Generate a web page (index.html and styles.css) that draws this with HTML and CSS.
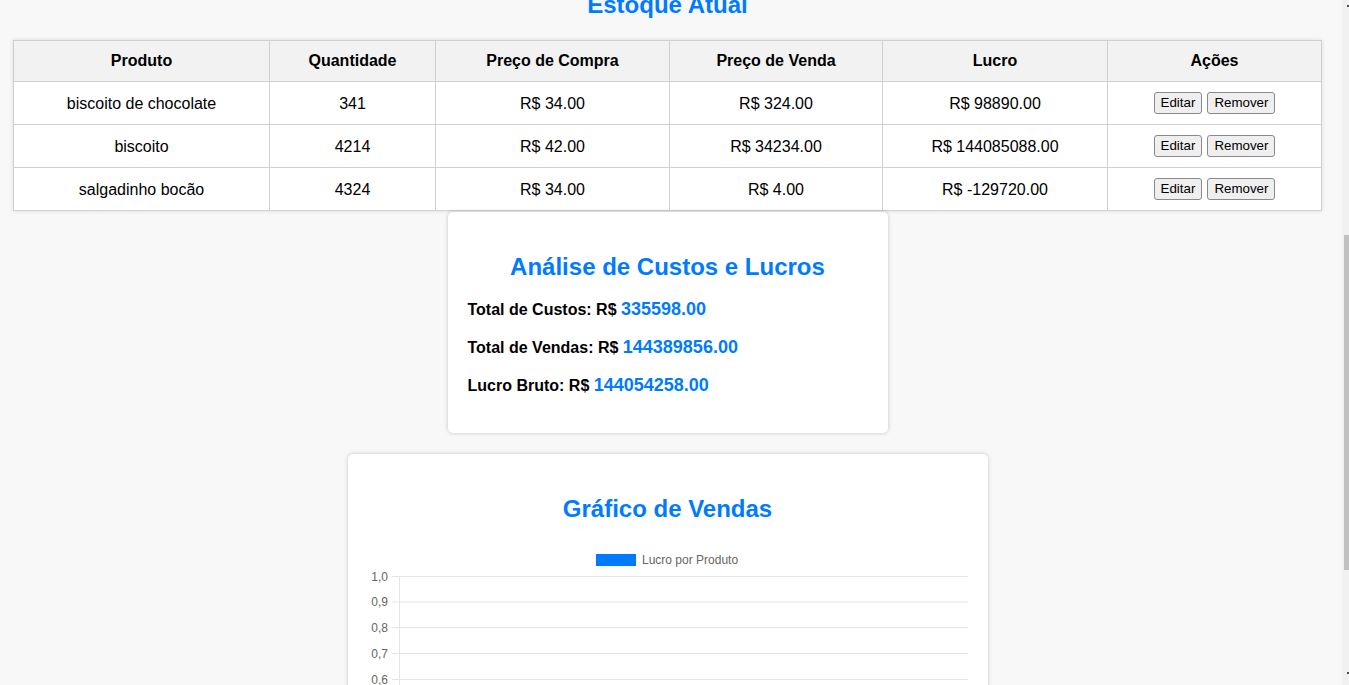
FILE: index.html
```html
<!DOCTYPE html>
<html lang="pt-BR">
<head>
<meta charset="utf-8">
<title>Estoque</title>
<link rel="stylesheet" href="styles.css">
</head>
<body>
<div class="viewport">
  <main class="page">
    <h2 class="title">Estoque Atual</h2>
    <table class="stock">
      <colgroup>
        <col class="c-prod"><col class="c-qty"><col class="c-buy"><col class="c-sell"><col class="c-profit"><col class="c-act">
      </colgroup>
      <thead>
        <tr><th>Produto</th><th>Quantidade</th><th>Preço de Compra</th><th>Preço de Venda</th><th>Lucro</th><th>Ações</th></tr>
      </thead>
      <tbody>
        <tr><td>biscoito de chocolate</td><td>341</td><td>R$ 34.00</td><td>R$ 324.00</td><td>R$ 98890.00</td><td class="actions"><div class="btns"><button class="btn">Editar</button><button class="btn">Remover</button></div></td></tr>
        <tr><td>biscoito</td><td>4214</td><td>R$ 42.00</td><td>R$ 34234.00</td><td>R$ 144085088.00</td><td class="actions"><div class="btns"><button class="btn">Editar</button><button class="btn">Remover</button></div></td></tr>
        <tr><td>salgadinho bocão</td><td>4324</td><td>R$ 34.00</td><td>R$ 4.00</td><td>R$ -129720.00</td><td class="actions"><div class="btns"><button class="btn">Editar</button><button class="btn">Remover</button></div></td></tr>
      </tbody>
    </table>

    <section class="card summary">
      <h2 class="card-title">Análise de Custos e Lucros</h2>
      <p class="line">Total de Custos: R$ <span class="val">335598.00</span></p>
      <p class="line">Total de Vendas: R$ <span class="val">144389856.00</span></p>
      <p class="line">Lucro Bruto: R$ <span class="val">144054258.00</span></p>
    </section>

    <section class="card chart-card">
      <h2 class="card-title">Gráfico de Vendas</h2>
      <svg class="chart" width="600" height="300" viewBox="0 0 600 300">
        <rect x="228" y="13" width="40" height="12" fill="#007bff"/>
        <text x="274" y="22.5" class="legend">Lucro por Produto</text>
        <g stroke="#e5e5e5" stroke-width="1">
          <line x1="24" x2="600" y1="35.5" y2="35.5"/>
          <line x1="24" x2="600" y1="61" y2="61"/>
          <line x1="24" x2="600" y1="86.5" y2="86.5"/>
          <line x1="24" x2="600" y1="112.5" y2="112.5"/>
          <line x1="24" x2="600" y1="138.5" y2="138.5"/>
          <line x1="24" x2="600" y1="164" y2="164"/>
          <line x1="24" x2="600" y1="190" y2="190"/>
          <line x1="24" x2="600" y1="215.5" y2="215.5"/>
          <line x1="24" x2="600" y1="241.5" y2="241.5"/>
          <line x1="24" x2="600" y1="267" y2="267"/>
          <line x1="24" x2="600" y1="293" y2="293"/>
          <line x1="31.5" x2="31.5" y1="35" y2="300"/>
        </g>
        <g class="ticks">
          <text x="20" y="39.5">1,0</text>
          <text x="20" y="65">0,9</text>
          <text x="20" y="90.5">0,8</text>
          <text x="20" y="116.5">0,7</text>
          <text x="20" y="142.5">0,6</text>
          <text x="20" y="168">0,5</text>
          <text x="20" y="194">0,4</text>
          <text x="20" y="219.5">0,3</text>
          <text x="20" y="245.5">0,2</text>
          <text x="20" y="271">0,1</text>
          <text x="20" y="297">0</text>
        </g>
      </svg>
    </section>
  </main>
  <div class="scrollbar">
    <span class="arrow arrow-up"></span>
    <div class="thumb"></div>
    <span class="arrow arrow-down"></span>
  </div>
</div>
</body>
</html>
```

FILE: styles.css
```css
html, body {
  margin: 0;
  padding: 0;
  height: 100%;
}

body {
  background: #f8f8f8;
  font-family: "Liberation Sans", Arial, sans-serif;
  color: #000;
  overflow: hidden;
}

.viewport {
  display: flex;
  height: 685px;
  overflow: hidden;
}

.page {
  flex: 1;
  padding: 0 20px 0 13px;
  overflow: hidden;
  display: flex;
  flex-direction: column;
}

.title {
  margin: -9px 0 21px;
  font-size: 24px;
  line-height: 28px;
  font-weight: bold;
  color: #007bff;
  text-align: center;
}

.stock {
  width: 100%;
  border-collapse: collapse;
  table-layout: fixed;
  background: #fff;
  box-shadow: 0 0 4px rgba(0, 0, 0, 0.12);
  font-size: 16px;
  line-height: 18px;
  flex-shrink: 0;
}

.c-prod { width: 256px; }
.c-qty { width: 166px; }
.c-buy { width: 234px; }
.c-sell { width: 213px; }
.c-profit { width: 225px; }
.c-act { width: 214px; }

.stock th,
.stock td {
  border: 1px solid #d0d0d0;
  text-align: center;
  white-space: nowrap;
}

.stock th {
  background: #f2f2f2;
  font-weight: bold;
  padding: 11px 12px;
}

.stock td {
  padding: 13px 12px 11px;
}

.stock td.actions {
  padding: 10px 12px;
}

.btns {
  display: flex;
  justify-content: center;
  gap: 5px;
  height: 22px;
}

.btn {
  height: 22px;
  padding: 0 6px;
  font-family: "Liberation Sans", Arial, sans-serif;
  font-size: 13.33px;
  line-height: 18px;
  color: #000;
  background: #efefef;
  border: 1px solid #8a8a8a;
  border-radius: 3px;
}

.card {
  background: #fff;
  border-radius: 5px;
  box-shadow: 0 0 4px rgba(0, 0, 0, 0.2);
  padding: 20px;
  margin: 0 auto;
  flex-shrink: 0;
}

.summary {
  width: 400px;
  margin-top: 1px;
}

.chart-card {
  width: 600px;
  margin-top: 21px;
}

.card-title {
  margin: 21px 0 18px;
  font-size: 24px;
  line-height: 28px;
  font-weight: bold;
  color: #007bff;
  text-align: center;
}

.line {
  margin: 16px 0;
  font-size: 16px;
  line-height: 22px;
  font-weight: bold;
}

.line .val {
  font-size: 18px;
  line-height: 1;
  color: #007bff;
}

.chart {
  display: block;
}

.legend {
  font-family: "Liberation Sans", Arial, sans-serif;
  font-size: 12px;
  fill: #666;
}

.ticks text {
  font-family: "Liberation Sans", Arial, sans-serif;
  font-size: 12px;
  fill: #666;
  text-anchor: end;
}

.scrollbar {
  width: 7px;
  flex-shrink: 0;
  background: #f1f1f1;
  display: flex;
  flex-direction: column;
  align-items: flex-end;
}

.arrow {
  display: block;
  width: 2px;
  height: 2px;
  background: #505050;
}

.arrow-up {
  margin-top: 5px;
}

.thumb {
  width: 5px;
  height: 335px;
  margin-top: 228px;
  background: #c1c1c1;
}

.arrow-down {
  margin-top: 102px;
}
```
